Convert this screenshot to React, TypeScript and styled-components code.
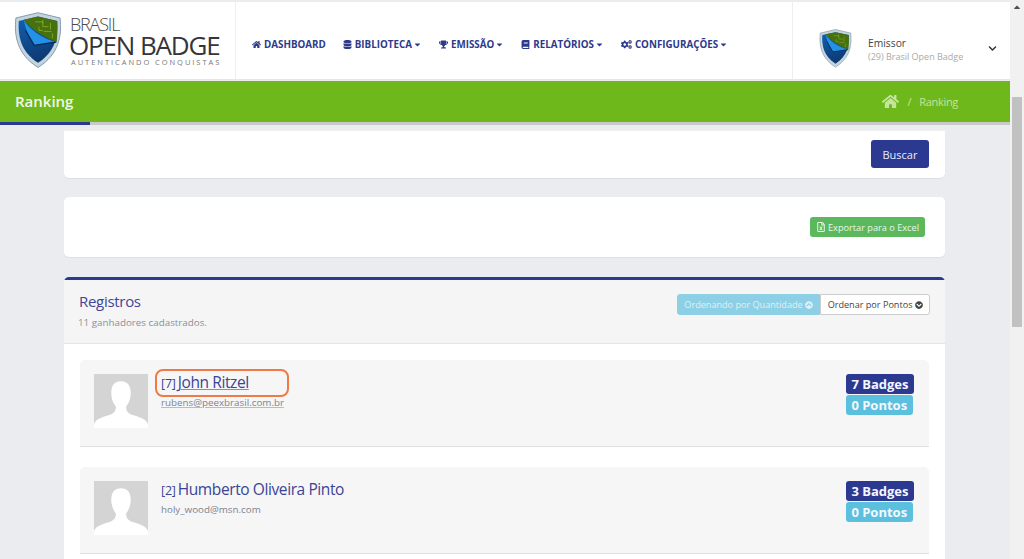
import React from 'react'
import styled, { createGlobalStyle } from 'styled-components'
import {
  FaHome,
  FaDatabase,
  FaTrophy,
  FaBook,
  FaCogs,
  FaCaretDown,
  FaChevronDown,
  FaRegFileExcel,
  FaChevronCircleUp,
  FaChevronCircleDown,
  FaCaretUp,
} from 'react-icons/fa'

const GlobalStyle = createGlobalStyle`
  html, body {
    margin: 0;
    padding: 0;
    height: 559px;
    overflow: hidden;
    background: #ebecf0;
    font-family: "Open Sans", "Liberation Sans", sans-serif;
  }
  * { box-sizing: border-box; }
`

const Page = styled.div`
  display: flex;
  width: 1024px;
  height: 559px;
  overflow: hidden;
`
const Main = styled.div`
  width: 1010px;
  flex-shrink: 0;
  display: flex;
  flex-direction: column;
  overflow: hidden;
`
const Scrollbar = styled.div`
  width: 14px;
  background: #f1f1f1;
  display: flex;
  flex-direction: column;
  align-items: center;
  color: #505050;
  font-size: 10px;
`
const ScrollArrow = styled.div`
  height: 14px;
  margin-bottom: 83px;
  display: flex;
  align-items: center;
`
const ScrollThumb = styled.div`
  width: 10px;
  height: 230px;
  background: #c1c1c1;
`
const Header = styled.header`
  margin-top: 2px;
  height: 78px;
  flex-shrink: 0;
  background: #fff;
  display: flex;
  border-bottom: 1px solid #e6e6e6;
`
const LogoArea = styled.div`
  width: 236px;
  border-right: 1px solid #eee;
  display: flex;
  align-items: center;
  padding-left: 14px;
  gap: 6px;
`
const LogoText = styled.div`
  display: flex;
  flex-direction: column;
  color: #4a4a4f;
  margin-top: 1px;
`
const LogoTop = styled.span`
  font-size: 18px;
  line-height: 18px;
  font-weight: 300;
  letter-spacing: -1.2px;
  margin-left: 2px;
`
const LogoMain = styled.span`
  font-size: 26px;
  line-height: 25px;
  font-weight: 400;
  letter-spacing: -1.15px;
  margin-left: 1px;
  color: #35353a;
  white-space: nowrap;
`
const LogoSub = styled.span`
  font-size: 7.5px;
  line-height: 9px;
  letter-spacing: 1.95px;
  margin-left: 3px;
  color: #777;
  white-space: nowrap;
`
const Nav = styled.nav`
  display: flex;
  align-items: center;
  gap: 17px;
  padding: 8px 0 0 16px;
  flex: 1;
`
const NavItem = styled.a`
  display: flex;
  align-items: center;
  gap: 3px;
  font-size: 9.8px;
  font-weight: 700;
  color: #2d3a8c;
  white-space: nowrap;
`
const NavCaret = styled(FaCaretDown)`
  margin-left: -2px;
`
const Account = styled.div`
  width: 218px;
  border-left: 1px solid #eee;
  display: flex;
  align-items: center;
  padding: 16px 0 0 26px;
  position: relative;
`
const AccountText = styled.div`
  margin-left: 16px;
  display: flex;
  flex-direction: column;
  padding-top: 2px;
`
const AccountRole = styled.span`
  font-size: 10.3px;
  line-height: 14px;
  color: #444;
`
const AccountOrg = styled.span`
  font-size: 9px;
  line-height: 14px;
  color: #aaa;
`
const AccountChevron = styled.div`
  margin-left: 25px;
  color: #333;
  font-size: 9px;
  display: flex;
`
const TitleBar = styled.div`
  height: 41px;
  flex-shrink: 0;
  background: #6eb81b;
  margin-top: 1px;
  display: flex;
  align-items: center;
  justify-content: space-between;
  padding: 0 52px 0 15px;
`
const PageTitle = styled.h1`
  margin: 0 0 2px;
  font-size: 15px;
  font-weight: 600;
  color: #f2f8e6;
`
const Breadcrumb = styled.div`
  display: flex;
  align-items: center;
  color: #c5e59c;
  font-size: 11px;
  gap: 8px;
  letter-spacing: -0.3px;
`
const Progress = styled.div`
  height: 3px;
  background: #c9c9c9;
  flex-shrink: 0;
`
const ProgressFill = styled.div`
  width: 90px;
  height: 3px;
  background: #2b3990;
`
const Content = styled.div`
  padding: 0 65px 0 64px;
  display: flex;
  flex-direction: column;
  flex-shrink: 0;
`
const Card = styled.div<{ $height: number; $mb: number }>`
  height: ${p => p.$height}px;
  flex-shrink: 0;
  margin-bottom: ${p => p.$mb}px;
  background: #fff;
  border-radius: 0 0 5px 5px;
  box-shadow: 0 1px 1px rgba(0, 0, 0, 0.06);
  display: flex;
  justify-content: flex-end;
`
const SearchCard = styled(Card)`
  margin-top: 5px;
  border-top: 1px solid #f0f0f0;
  padding: 9px 16px 0 0;
  align-items: flex-start;
`
const ExportCard = styled(Card)`
  border-radius: 5px;
  padding: 20px 20px 0 0;
  align-items: flex-start;
`
const SearchButton = styled.button`
  width: 58px;
  height: 28px;
  background: #2b3990;
  border: 0;
  border-radius: 3px;
  color: #e8ecff;
  font: 400 11px "Open Sans", sans-serif;
`
const ExportButton = styled.button`
  width: 115px;
  height: 20px;
  padding: 0;
  background: #5cb85c;
  border: 0;
  border-radius: 3px;
  color: #eaf7ea;
  font: 400 9.2px "Open Sans", sans-serif;
  display: flex;
  align-items: center;
  justify-content: center;
  gap: 2px;
  white-space: nowrap;
`
const Panel = styled.section`
  background: #fff;
  border-top: 3px solid #2b3990;
  border-radius: 5px 5px 0 0;
`
const PanelHead = styled.div`
  height: 64px;
  background: #f5f5f6;
  border-bottom: 1px solid #e5e5e5;
  padding: 11px 15px 0;
  display: flex;
  justify-content: space-between;
`
const PanelTitle = styled.div`
  font-size: 15px;
  line-height: 20px;
  color: #3d4696;
  letter-spacing: -0.3px;
`
const PanelSub = styled.div`
  font-size: 9.8px;
  line-height: 14px;
  margin-top: 5px;
  margin-left: -1px;
  color: #8a8f99;
`
const SortGroup = styled.div`
  display: flex;
  height: 21px;
  margin-top: 3px;
`
const SortButton = styled.div<{ $active?: boolean }>`
  display: flex;
  align-items: center;
  gap: 2px;
  font-size: 9.1px;
  white-space: nowrap;
  padding: 0 6.5px;
  color: ${p => (p.$active ? '#def1f8' : '#444')};
  background: ${p => (p.$active ? '#8dd0e6' : '#fff')};
  border: 1px solid ${p => (p.$active ? '#8dd0e6' : '#ccc')};
  border-radius: ${p => (p.$active ? '3px 0 0 3px' : '0 3px 3px 0')};
`
const List = styled.div`
  padding: 16px 16px 20px;
  display: flex;
  flex-direction: column;
  gap: 20px;
`
const Row = styled.div`
  height: 87px;
  background: #f6f6f7;
  border-bottom: 1px solid #e0e0e0;
  border-radius: 5px 5px 0 0;
  padding: 14px 15px 0 14px;
  display: flex;
`
const Avatar = styled.svg`
  width: 54px;
  height: 54px;
  flex-shrink: 0;
`
const Info = styled.div`
  margin-left: 13px;
  flex: 1;
  display: flex;
  flex-direction: column;
`
const NameWrap = styled.div`
  position: relative;
  height: 18px;
  margin-top: -1px;
  display: flex;
  align-items: baseline;
  gap: 2px;
  color: #3a4494;
`
const NameIndex = styled.span`
  font-size: 12.5px;
  letter-spacing: -0.2px;
`
const NameText = styled.span<{ $underline?: boolean }>`
  font-size: 15.5px;
  letter-spacing: -0.4px;
  line-height: 18px;
  white-space: nowrap;
  text-decoration: ${p => (p.$underline ? 'underline #6eb81b 1px' : 'none')};
  text-underline-offset: 1px;
`
const Highlight = styled.div`
  position: absolute;
  left: -6px;
  top: -4px;
  width: 134px;
  height: 28px;
  border: 2px solid #f07a45;
  border-radius: 8px;
`
const Email = styled.span<{ $underline?: boolean }>`
  font-size: 9.8px;
  line-height: 13px;
  margin-top: 5px;
  color: #7c8290;
  width: fit-content;
  text-decoration: ${p => (p.$underline ? 'underline #a9cf85 1px' : 'none')};
  text-underline-offset: 1px;
`
const Badges = styled.div`
  display: flex;
  flex-direction: column;
  align-items: flex-start;
  gap: 1px;
`
const Badge = styled.span<{ $bg: string }>`
  height: 20px;
  padding: 0 5.5px;
  background: ${p => p.$bg};
  border-radius: 3px;
  color: #f5f7ff;
  font-size: 13px;
  line-height: 20px;
  font-weight: 700;
  white-space: nowrap;
`

const Shield = ({ size }: { size: number }) => (
  <svg width={size} height={size * 1.17} viewBox="0 0 50 58" style={{ flexShrink: 0 }}>
    <defs>
      <linearGradient id="shieldBody" x1="0" y1="0" x2="0.3" y2="1">
        <stop offset="0" stopColor="#1161b5" />
        <stop offset="1" stopColor="#0e3a72" />
      </linearGradient>
    </defs>
    <path d="M25 0.500 L48 6 C50 24 47 44 25 57.500 C3 44 0 24 2 6 Z" fill="#c4d4de" stroke="#7f99a8" strokeWidth="1" />
    <path d="M25 4.500 L45 9 C46 25 43 41 25 52.500 C7 41 4 25 5 9 Z" fill="url(#shieldBody)" />
    <path d="M10 7.800 L25 4.500 L45 9 C45.500 17 45.200 24 44.500 31 C32 27 18 18 10 7.800 Z" fill="#47700f" />
    <path d="M22 10 h8 v5 h6 M30 8 v4 M38 11 v7 M31 20 h8 M26 15 v4 h4 M40 22 v5" stroke="#8db02e" strokeWidth="0.8" fill="none" />
    <path d="M10 7.800 C16 18 30 28 45 31 L21 34.500 C16 27 12 18 10 7.800 Z" fill="#2291e6" />
    <path d="M12 19 L21 34.500 L44 31" stroke="#0a2a58" strokeWidth="1.4" fill="none" />
  </svg>
)

const AvatarImage = () => (
  <Avatar viewBox="0 0 53 53">
    <rect width="53" height="53" fill="#d4d4d4" />
    <path d="M26.500 7 C19.500 7 16.500 12 17 20 C17.500 26 20 30 21.500 32 C21.500 36 20.500 38 16 40 C9 42 2 44 0 49 V53 H53 V49 C51 44 44 42 37 40 C32.500 38 31.500 36 31.500 32 C33 30 35.500 26 36 20 C36.500 12 33.500 7 26.500 7 Z" fill="#fff" />
  </Avatar>
)

const navItems = [
  { icon: <FaHome size={9} />, label: 'DASHBOARD' },
  { icon: <FaDatabase size={9} />, label: 'BIBLIOTECA', caret: true },
  { icon: <FaTrophy size={9} />, label: 'EMISSÃO', caret: true },
  { icon: <FaBook size={9} />, label: 'RELATÓRIOS', caret: true },
  { icon: <FaCogs size={11} />, label: 'CONFIGURAÇÕES', caret: true },
]

const winners = [
  { index: '[7]', name: 'John Ritzel', email: 'rubens@peexbrasil.com.br', badges: '7 Badges', marked: true },
  { index: '[2]', name: 'Humberto Oliveira Pinto', email: 'holy_wood@msn.com', badges: '3 Badges' },
]

export default function App() {
  return (
    <Page>
      <GlobalStyle />
      <Main>
        <Header>
          <LogoArea>
            <Shield size={48} />
            <LogoText>
              <LogoTop>BRASIL</LogoTop>
              <LogoMain>OPEN BADGE</LogoMain>
              <LogoSub>AUTENTICANDO CONQUISTAS</LogoSub>
            </LogoText>
          </LogoArea>
          <Nav>
            {navItems.map(item => (
              <NavItem key={item.label}>
                {item.icon}
                {item.label}
                {item.caret && <NavCaret size={9} />}
              </NavItem>
            ))}
          </Nav>
          <Account>
            <Shield size={33} />
            <AccountText>
              <AccountRole>Emissor</AccountRole>
              <AccountOrg>(29) Brasil Open Badge</AccountOrg>
            </AccountText>
            <AccountChevron>
              <FaChevronDown />
            </AccountChevron>
          </Account>
        </Header>
        <TitleBar>
          <PageTitle>Ranking</PageTitle>
          <Breadcrumb>
            <FaHome size={17} />
            <span>/</span>
            <span>Ranking</span>
          </Breadcrumb>
        </TitleBar>
        <Progress>
          <ProgressFill />
        </Progress>
        <Content>
          <SearchCard $height={48} $mb={19}>
            <SearchButton>Buscar</SearchButton>
          </SearchCard>
          <ExportCard $height={60} $mb={20}>
            <ExportButton>
              <FaRegFileExcel size={10} /> Exportar para o Excel
            </ExportButton>
          </ExportCard>
          <Panel>
            <PanelHead>
              <div>
                <PanelTitle>Registros</PanelTitle>
                <PanelSub>11 ganhadores cadastrados.</PanelSub>
              </div>
              <SortGroup>
                <SortButton $active>
                  Ordenando por Quantidade <FaChevronCircleUp size={8} />
                </SortButton>
                <SortButton>
                  Ordenar por Pontos <FaChevronCircleDown size={8} />
                </SortButton>
              </SortGroup>
            </PanelHead>
            <List>
              {winners.map(w => (
                <Row key={w.email}>
                  <AvatarImage />
                  <Info>
                    <NameWrap>
                      <NameIndex>{w.index}</NameIndex>
                      <NameText $underline={w.marked}>{w.name}</NameText>
                      {w.marked && <Highlight />}
                    </NameWrap>
                    <Email $underline={w.marked}>{w.email}</Email>
                  </Info>
                  <Badges>
                    <Badge $bg="#2b3990">{w.badges}</Badge>
                    <Badge $bg="#5bc0de">0 Pontos</Badge>
                  </Badges>
                </Row>
              ))}
            </List>
          </Panel>
        </Content>
      </Main>
      <Scrollbar>
        <ScrollArrow>
          <FaCaretUp />
        </ScrollArrow>
        <ScrollThumb />
      </Scrollbar>
    </Page>
  )
}
